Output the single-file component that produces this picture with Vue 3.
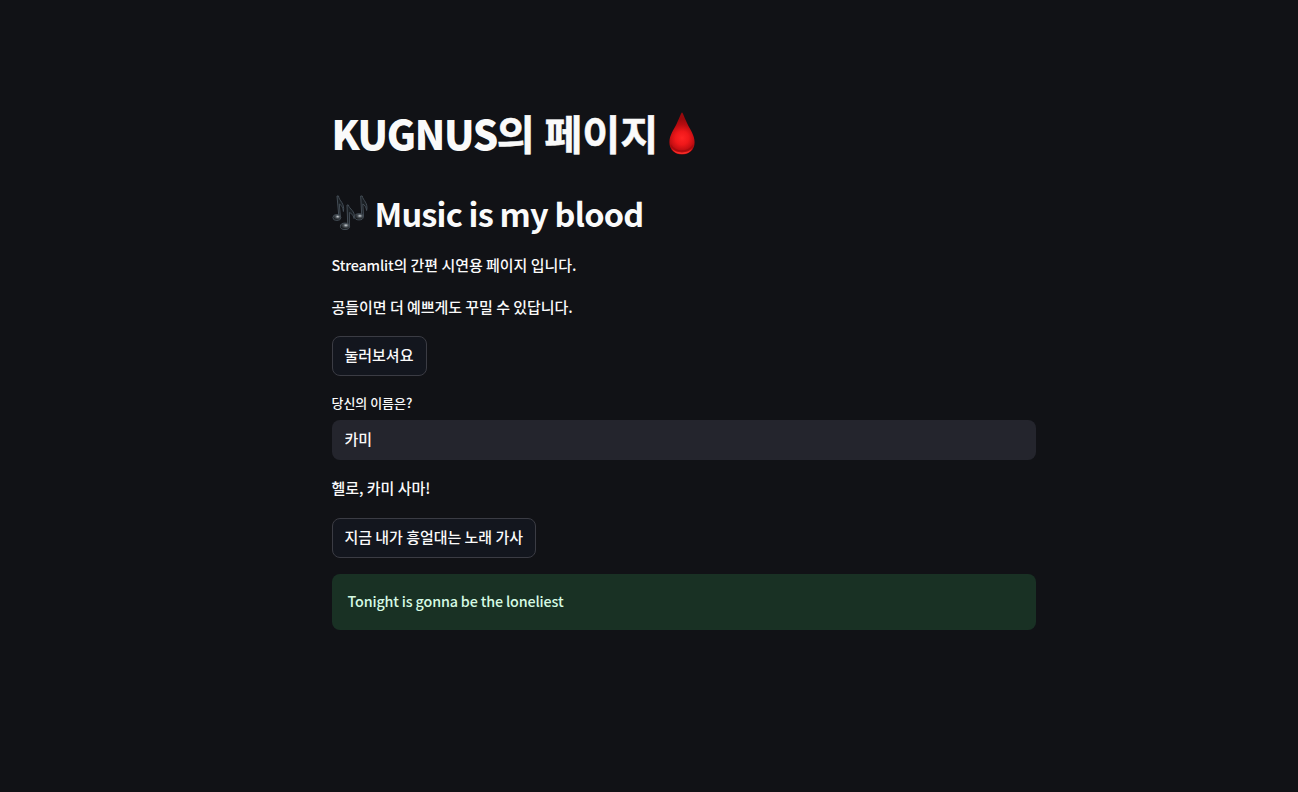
<script setup>
import { ref } from 'vue';

const name = ref('카미');
const lyrics = ref('Tonight is gonna be the loneliest');
</script>

<template>
  <main class="page">
    <div class="block">
      <h1 class="title">
        <span class="latin">KUGNUS</span><span class="hangul">의 페이지</span>
        <svg class="drop" viewBox="0 0 26 43">
          <defs>
            <radialGradient id="dropFill" cx="13" cy="26" r="19" gradientUnits="userSpaceOnUse">
              <stop offset="0" stop-color="#ff2424" />
              <stop offset="0.35" stop-color="#f0181a" />
              <stop offset="0.7" stop-color="#b90c10" />
              <stop offset="1" stop-color="#98090c" />
            </radialGradient>
          </defs>
          <path d="M13 0.5C14 1 15.2 5 18 11C21 17.5 25.6 23 25.6 30.2C25.6 37.6 20.3 42.5 13 42.5C5.7 42.5 0.4 37.6 0.4 30.2C0.4 23 5 17.5 8 11C10.8 5 12 1 13 0.5Z" fill="url(#dropFill)" />
          <path d="M2.5 35.5C6 42 20 42 23.5 35.5C21.5 40.5 18 42 13 42S4.5 40.5 2.5 35.5Z" fill="#f52a26" />
          <path d="M1.8 33C6 40.8 20 40.8 24.2 33" fill="none" stroke="#9c0a0d" stroke-opacity="0.6" stroke-width="1.4" />
        </svg>
      </h1>

      <h2 class="header">
        <svg class="notes" viewBox="0 0 36 36">
          <defs>
            <radialGradient id="noteHead" cx="0.6" cy="0.35" r="0.65">
              <stop offset="0" stop-color="#d0d5d9" />
              <stop offset="0.4" stop-color="#4b5258" />
              <stop offset="1" stop-color="#07080a" />
            </radialGradient>
          </defs>
          <g fill="#1b2025" stroke="#434c55" stroke-width="1" stroke-linejoin="round">
            <path d="M5 1L6.5 1C7 6 13 8 11.4 16.5C10.8 11.5 9 10 7.3 9L8.4 22H6.9Z" />
            <path d="M15 10L16.4 10C17 14 24 16 22 23.5C21.3 19.5 19 18.3 17.4 17.5V31H15.8Z" />
            <path d="M28.7 1L30.2 1C31 5.5 36.5 8 34.6 15.5C34 11.5 32.5 10 30.8 9L31.5 21.5H29.8Z" />
            <ellipse cx="4.9" cy="22.5" rx="4" ry="3" fill="url(#noteHead)" />
            <ellipse cx="13" cy="31.3" rx="4.6" ry="3.2" fill="url(#noteHead)" />
            <ellipse cx="27" cy="21.8" rx="4.3" ry="3.1" fill="url(#noteHead)" />
          </g>
        </svg>
        <span class="latin">Music is my blood</span>
      </h2>

      <p class="text"><span class="latin">Streamlit</span>의 간편 시연용 페이지 입니다.</p>
      <p class="text">공들이면 더 예쁘게도 꾸밀 수 있답니다.</p>

      <button class="button" type="button">눌러보셔요</button>

      <label class="label" for="name">당신의 이름은?</label>
      <input id="name" v-model="name" class="input" type="text" />

      <p class="text greeting">헬로, {{ name }} 사마!</p>

      <button class="button" type="button">지금 내가 흥얼대는 노래 가사</button>

      <div class="success"><span class="latin">{{ lyrics }}</span></div>
    </div>
  </main>
</template>

<style>
body {
  margin: 0;
  background: #111216;
}
</style>

<style scoped>
.page {
  box-sizing: border-box;
  height: 792px;
  padding: 96px 262px 0 331.5px;
  overflow: hidden;
  color: #fafafa;
  font-family: "Noto Sans CJK KR", sans-serif;
  font-size: 15px;
  font-weight: 500;
  letter-spacing: -0.04px;
}

.block {
  display: flex;
  flex-direction: column;
  align-items: flex-start;
  width: 704.5px;
}

.latin {
  font-size: 0.955em;
}

.text .latin,
.success .latin {
  letter-spacing: -0.15px;
}

.title {
  display: flex;
  align-items: baseline;
  height: 84px;
  margin: 0;
  font-size: 41.4px;
  font-weight: 700;
  line-height: 72px;
  white-space: pre;
}

.title .latin {
  font-size: 40px;
  font-weight: 900;
  letter-spacing: -1.35px;
}

.hangul {
  -webkit-text-stroke: 0.5px currentColor;
}

.drop {
  align-self: flex-start;
  width: 26px;
  height: 43px;
  margin: 16px 0 0 11px;
}

.header {
  display: flex;
  height: 76px;
  margin: 0;
  font-size: 34px;
  font-weight: 700;
  line-height: 65px;
}

.header .latin {
  letter-spacing: -0.78px;
}

.notes {
  width: 36px;
  height: 36px;
  margin: 15px 7px 0 0;
}

.text {
  height: 26px;
  margin: 0 0 16px;
  line-height: 18px;
}

.button {
  min-width: 95px;
  height: 40px;
  margin: 0 0 16px;
  padding: 0 12px 3px;
  border: 1px solid #3b3c44;
  border-radius: 8px;
  background: #13161e;
  color: inherit;
  font: inherit;
  letter-spacing: inherit;
  line-height: 24px;
}

.text + .button {
  margin-top: -4px;
}

.label {
  height: 28px;
  font-size: 13px;
  line-height: 21px;
}

.input {
  box-sizing: border-box;
  width: 100%;
  height: 40px;
  margin-bottom: 19px;
  padding: 0 12px 4px 13px;
  border: 0;
  border-radius: 8px;
  outline: none;
  background: #24252d;
  color: inherit;
  font: inherit;
}

.greeting {
  height: 27px;
}

.success {
  box-sizing: border-box;
  width: 100%;
  height: 56px;
  padding: 15px 16px;
  border-radius: 8px;
  background: #193124;
  color: #d5fae3;
  line-height: 24px;
}
</style>
